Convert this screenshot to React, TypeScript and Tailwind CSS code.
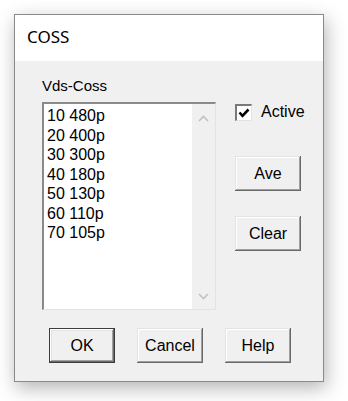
import React from "react";

const F = { fontFamily: '"Liberation Sans", Arial, sans-serif' };

function Btn({ label, def }: { label: string; def?: boolean }) {
  return (
    <div
      className={
        "w-[66px] h-[35px] flex items-center justify-center bg-[#f0f0f0] text-[16px] text-black " +
        (def ? "border border-[#3c3c3c]" : "")
      }
      style={{
        ...F,
        boxShadow: def
          ? "inset -1px -1px #696969, inset 1px 1px #ffffff, inset -2px -2px #a0a0a0, inset 2px 2px #e3e3e3"
          : "inset -1px -1px #696969, inset 1px 1px #e3e3e3, inset -2px -2px #a0a0a0, inset 2px 2px #ffffff",
      }}
    >
      {label}
    </div>
  );
}

export default function App() {
  const rows = ["10 480p", "20 400p", "30 300p", "40 180p", "50 130p", "60 110p", "70 105p"];
  return (
    <div className="w-[348px] h-[401px] bg-white pt-[14px] pl-[14px]">
      <div className="w-[310px] h-[368px] border border-[#8a8a8a] bg-[#f0f0f0] shadow-[2px_6px_18px_rgba(0,0,0,0.3)] flex flex-col">
        <div
          className="h-[46px] bg-white pl-[12px] pt-[9px] text-[17px] text-black leading-normal"
          style={{ fontFamily: '"Noto Sans", "Open Sans", sans-serif' }}
        >
          COSS
        </div>
        <div className="flex-1 pl-[27px] pt-[16px] flex flex-col" style={F}>
          <div className="text-[15px] leading-[17px] text-black">Vds-Coss</div>
          <div className="flex mt-[8px]">
            <div className="w-[174px] h-[208px] flex bg-white border-t-2 border-l-2 border-b border-r border-t-[#8a8a8a] border-l-[#8a8a8a] border-b-[#e3e3e3] border-r-[#e3e3e3]">
              <div className="flex-1 pl-[3px] pt-[2px] text-[16px] leading-[19.5px] text-black">
                {rows.map((r) => (
                  <div key={r}>{r}</div>
                ))}
              </div>
              <div className="w-[23px] bg-[#f0f0f0] flex flex-col items-center justify-between pt-[11px] pb-[9px]">
                <svg width="11" height="7" viewBox="0 0 11 7">
                  <path d="M1 6 L5.5 1.5 L10 6" fill="none" stroke="#c2c2c2" strokeWidth="1.6" />
                </svg>
                <svg width="11" height="7" viewBox="0 0 11 7">
                  <path d="M1 1 L5.5 5.5 L10 1" fill="none" stroke="#c2c2c2" strokeWidth="1.6" />
                </svg>
              </div>
            </div>
            <div className="ml-[19px] flex flex-col">
              <div className="flex items-center mt-[1px]">
                <div className="w-[17px] h-[17px] bg-white border-t-2 border-l-2 border-b border-r border-t-[#7a7a7a] border-l-[#7a7a7a] border-b-[#e3e3e3] border-r-[#e3e3e3] flex items-center justify-center">
                  <svg width="12" height="10" viewBox="0 0 12 10">
                    <path d="M1.5 4.5 L4.5 7.8 L10.5 1.5" fill="none" stroke="#000" strokeWidth="2.6" />
                  </svg>
                </div>
                <span className="ml-[9px] text-[16px] leading-[18px] text-black">Active</span>
              </div>
              <div className="mt-[35px]">
                <Btn label="Ave" />
              </div>
              <div className="mt-[25px]">
                <Btn label="Clear" />
              </div>
            </div>
          </div>
          <div className="flex gap-[22px] ml-[7px] mt-[18px]">
            <Btn label="OK" def />
            <Btn label="Cancel" />
            <Btn label="Help" />
          </div>
        </div>
      </div>
    </div>
  );
}
